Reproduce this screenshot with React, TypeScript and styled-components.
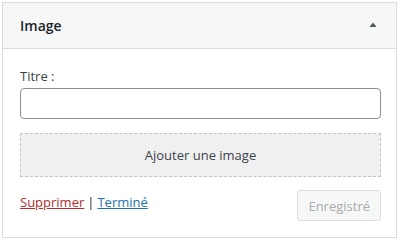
import styled, { createGlobalStyle } from "styled-components";

const GlobalStyle = createGlobalStyle`
  html, body {
    margin: 0;
    padding: 0;
    background: #fff;
  }
  body {
    font-family: "Open Sans", "Noto Sans", sans-serif;
    font-size: 13px;
    color: #3c434a;
  }
`;

export default function App() {
  return (
    <>
      <GlobalStyle />
      <Card>
        <Header>
          <HeaderTitle>Image</HeaderTitle>
          <Toggle aria-label="Réduire">
            <svg width="8" height="5" viewBox="0 0 8 5">
              <path d="M0.5 5 L4 0.5 L7.5 5 Z" fill="#50575e" />
            </svg>
          </Toggle>
        </Header>
        <Body>
          <Field>
            <Label htmlFor="titre">Titre :</Label>
            <Input id="titre" type="text" />
          </Field>
          <AddImage type="button">Ajouter une image</AddImage>
          <Actions>
            <Links>
              <DeleteLink href="#">Supprimer</DeleteLink>
              <Sep>|</Sep>
              <DoneLink href="#">Terminé</DoneLink>
            </Links>
            <SaveButton type="button" disabled>
              Enregistré
            </SaveButton>
          </Actions>
        </Body>
      </Card>
    </>
  );
}

const Card = styled.div`
  width: 393px;
  margin: 2px 0 0 2px;
  border: 1px solid #dcdcde;
  background: #fff;
`;

const Header = styled.div`
  height: 45px;
  display: flex;
  align-items: center;
  justify-content: space-between;
  padding: 0 19px 0 17px;
  background: #f6f7f7;
  border-bottom: 1px solid #dcdcde;
`;

const HeaderTitle = styled.h3`
  margin: 0;
  font-size: 14px;
  font-weight: 600;
  color: #1d2327;
`;

const Toggle = styled.button`
  display: flex;
  align-items: center;
  justify-content: center;
  padding: 0;
  margin-top: -2px;
  border: 0;
  background: none;
`;

const Body = styled.div`
  padding: 17px 15px 16px 17px;
`;

const Field = styled.div`
  display: flex;
  flex-direction: column;
`;

const Label = styled.label`
  line-height: 20px;
  margin-bottom: 2px;
`;

const Input = styled.input`
  box-sizing: border-box;
  width: 100%;
  height: 31px;
  margin: 0;
  border: 1px solid #8c8f94;
  border-radius: 4px;
  background: #fff;
`;

const AddImage = styled.button`
  box-sizing: border-box;
  width: 100%;
  height: 44px;
  margin-top: 14px;
  border: 1px dashed #c3c4c7;
  background: #f0f0f1;
  font-family: inherit;
  font-size: 13px;
  color: #3c434a;
`;

const Actions = styled.div`
  display: flex;
  align-items: center;
  justify-content: space-between;
  margin-top: 13px;
`;

const Links = styled.div`
  display: flex;
  align-items: center;
  gap: 3px;
  margin-top: -7px;
`;

const DeleteLink = styled.a`
  color: #b32d2e;
`;

const DoneLink = styled.a`
  color: #2271b1;
`;

const Sep = styled.span`
  color: #1d2327;
`;

const SaveButton = styled.button`
  height: 31px;
  padding: 0 10px;
  border: 1px solid #dcdcde;
  border-radius: 3px;
  background: #f6f7f7;
  font-family: inherit;
  font-size: 13px;
  color: #a7aaad;
`;
